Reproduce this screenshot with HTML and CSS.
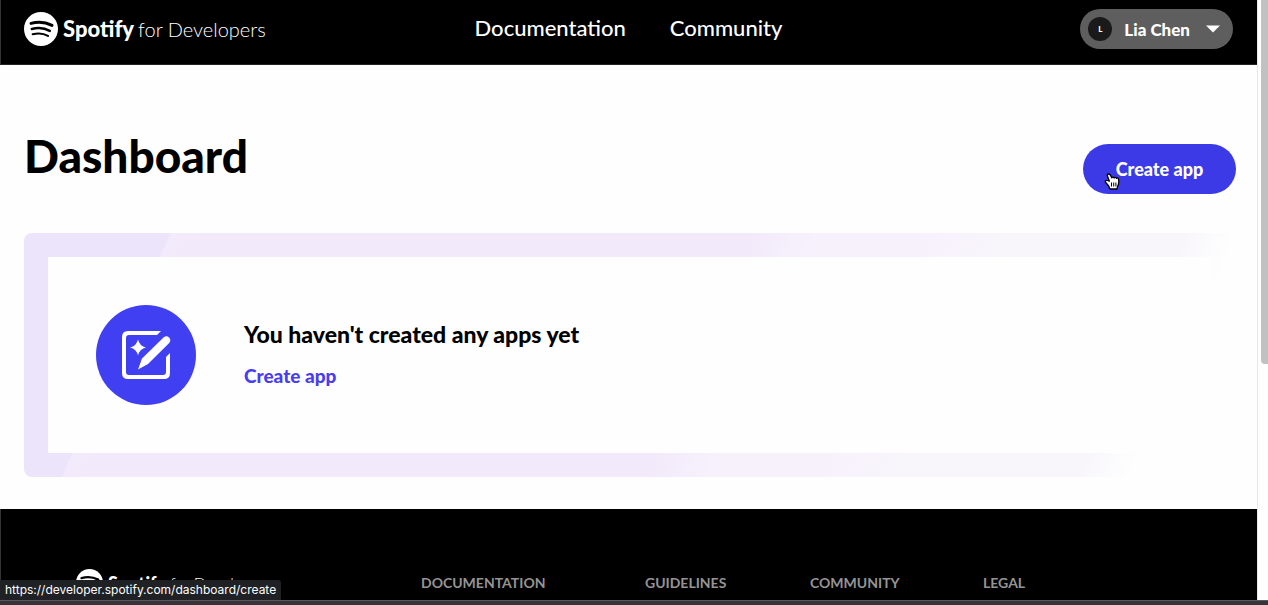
FILE: index.html
```html
<!DOCTYPE html>
<html lang="en">
<head>
<meta charset="utf-8">
<title>Dashboard | Spotify for Developers</title>
<link rel="stylesheet" href="styles.css">
</head>
<body>
<svg class="symbols" aria-hidden="true">
  <symbol id="spotify-mark" viewBox="0 0 34 34">
    <circle cx="17" cy="17" r="17" fill="#fff"/>
    <g fill="none" stroke="#000" stroke-linecap="round">
      <path d="M7 11.4C14 9.4 21.5 10 28 13.4" stroke-width="3"/>
      <path d="M7.8 17C14 15.200 20.500 15.900 25.800 18.900" stroke-width="2.500"/>
      <path d="M8.700 22.300C14 20.900 19.500 21.300 24 23.900" stroke-width="2.100"/>
    </g>
  </symbol>
</svg>
<div class="window">
  <div class="viewport">
    <div class="page">
      <header class="site-header">
        <a class="logo" href="#">
          <svg class="logo-mark" aria-hidden="true"><use href="#spotify-mark"/></svg>
          <span class="logo-name">Spotify</span><span class="logo-sub">for Developers</span>
        </a>
        <nav class="site-nav">
          <a href="#">Documentation</a>
          <a href="#">Community</a>
        </nav>
        <button class="user-menu" type="button">
          <span class="avatar">L</span>
          <span>Lia Chen</span>
          <svg class="caret" viewBox="0 0 14 8" aria-hidden="true"><path d="M0 .5h14L7 7.500z" fill="#fff"/></svg>
        </button>
      </header>
      <main class="content">
        <div class="title-row">
          <h1>Dashboard</h1>
          <div class="create-wrap">
            <button class="create-button" type="button">Create app</button>
            <svg class="pointer" viewBox="0 0 16 17" aria-hidden="true">
              <path d="M4.500 1C3.300 1 3 2 3.400 3l2 5.200L3.500 7.500C2 7 .8 8 1.500 9.300L4.700 13l1.200 3h7.200l.4-2.500c1.300-2 1.600-4.500 1-7.700-.3-1.100-1.500-1.200-2-.4-.3-1.200-1.800-1.300-2.300-.4-.5-1.100-1.900-1-2.300-.2L6.200 1.900C5.800 1.200 5.200 1 4.500 1z" fill="#fff" stroke="#000" stroke-width="1.300" stroke-linejoin="round"/>
              <path d="M7.500 9.500v4M9.700 9.500v4M11.900 9.500v4" stroke="#000" stroke-width="1"/>
            </svg>
          </div>
        </div>
        <section class="empty-frame">
          <div class="empty-panel">
            <svg class="empty-icon" viewBox="0 0 100 100" aria-hidden="true">
              <circle cx="50" cy="50" r="50" fill="#4040f2"/>
              <path d="M65 26H32q-6 0-6 6V68q0 6 6 6H68q6 0 6-6V48l-4 4V67q0 3-3 3H33q-3 0-3-3V33q0-3 3-3H61z" fill="#fff"/>
              <path d="M42 34.500q1.500 6.500 8 8-6.500 1.500-8 8-1.500-6.500-8-8 6.500-1.500 8-8z" fill="#fff"/>
              <path d="M42 64.500L46 53.500 67.500 32.500q3-2.500 5.500 0t.2 5.500L52 59z" fill="#fff"/>
            </svg>
            <div class="empty-text">
              <h2>You haven't created any apps yet</h2>
              <a href="#">Create app</a>
            </div>
          </div>
        </section>
      </main>
      <footer class="site-footer">
        <a class="logo logo-small" href="#">
          <svg class="logo-mark" aria-hidden="true"><use href="#spotify-mark"/></svg>
          <span class="logo-name">Spotify</span><span class="logo-sub">for Developers</span>
        </a>
        <h3>DOCUMENTATION</h3>
        <h3>GUIDELINES</h3>
        <h3>COMMUNITY</h3>
        <h3>LEGAL</h3>
      </footer>
    </div>
    <div class="scroll-track"><div class="scroll-thumb"></div></div>
    <div class="link-status">https://developer.spotify.com/dashboard/create</div>
  </div>
  <div class="window-edge"></div>
</div>
</body>
</html>
```
FILE: styles.css
```css
* { box-sizing: border-box; }
body {
  margin: 0;
  background: #fefefe;
  color: #000;
  font-family: Lato, "Liberation Sans", sans-serif;
}
h1, h2, h3 { margin: 0; font-weight: 700; }
a { color: inherit; text-decoration: none; }
button { border: 0; font: inherit; cursor: pointer; }
.symbols { display: none; }

.window { display: flex; flex-direction: column; height: 100vh; overflow: hidden; }
.viewport { position: relative; display: flex; flex: 1; min-height: 0; overflow: hidden; }
.page { flex: 1; min-width: 0; }

.site-header {
  display: grid;
  grid-template-columns: 1fr auto 1fr;
  align-items: center;
  padding: 9px 24px 15px 23px;
  background: #000;
  color: #fff;
  border-left: 1px solid #333;
  border-bottom: 1px solid #222;
}
.logo { display: flex; align-items: center; white-space: nowrap; color: #fff; font-size: 22px; line-height: 34px; }
.logo-mark { width: 34px; height: 34px; flex: none; }
.logo-name { margin-left: 5px; font-weight: 900; }
.logo-sub { margin-left: 4px; font-size: 20px; font-weight: 300; }

.site-nav { display: flex; gap: 44px; font-size: 22px; line-height: 28px; padding-bottom: 2px; font-weight: 500; }

.user-menu {
  justify-self: end;
  display: flex;
  align-items: center;
  height: 40px;
  padding: 0 13px 0 8px;
  border-radius: 20px;
  background: #5e5e5e;
  color: #fff;
  font-size: 17px;
  font-weight: 900;
}
.avatar {
  width: 24px;
  margin-right: 12px;
  border-radius: 50%;
  background: #1a1a1a;
  font-size: 8px;
  line-height: 24px;
}
.caret { width: 14px; height: 8px; margin-left: 16px; }

.content { padding: 60px 21px 32px 24px; }
.title-row { display: flex; align-items: flex-start; justify-content: space-between; height: 108px; }
h1 { font-size: 46px; line-height: 62px; font-weight: 900; }
.create-wrap { position: relative; margin-top: 19px; }
.create-button {
  min-width: 153px;
  height: 50px;
  border-radius: 25px;
  background: #3c3ae6;
  color: #fff;
  font-size: 18px;
  font-weight: 900;
}
.pointer { position: absolute; left: 21px; top: 29px; width: 16px; height: 17px; }

.empty-frame {
  padding: 24px;
  border-radius: 8px;
  background: linear-gradient(114deg,
    #ece4fb 0, #ece4fb 11%, #f3ebfb 11.200%, #f2e9fa 14%,
    #f2e9fa 55%, #f7f1fc 60%, #f7f1fc 68%,
    #f8f6fb 76%, #f8f6fb 88%, #fefefe 92%);
}
.empty-panel { display: flex; align-items: center; gap: 48px; padding: 48px; background: #fefefe; }
.empty-icon { width: 100px; height: 100px; flex: none; }
.empty-text { padding-bottom: 4px; }
h2 { font-size: 23px; line-height: 32px; font-weight: 900; }
.empty-text a { display: block; margin-top: 14px; color: #4a3df0; font-size: 19px; line-height: 24px; font-weight: 900; }

.site-footer {
  display: grid;
  grid-template-columns: 345fr 224fr 165fr 173fr 198fr;
  align-items: start;
  min-height: 100%;
  padding: 60px 76px 60px 75px;
  background: #000;
  border-left: 1px solid #333;
}
.site-footer h3 { margin-top: 4px; color: #949494; font-size: 14px; line-height: 20px; }
.logo-small { font-size: 18px; line-height: 26px; }
.logo-small .logo-mark { width: 27px; height: 27px; }
.logo-small .logo-sub { font-size: 16px; }

.scroll-track { width: 11px; padding-left: 3px; border-left: 1px solid #e8e8e8; background: #fefefe; }
.scroll-thumb { height: 364px; max-height: 61%; border-radius: 0 0 0 4px; background: #c1c1c1; }
.link-status {
  position: absolute;
  left: 0;
  bottom: 0;
  padding: 0 5px;
  border-top-right-radius: 3px;
  background: #202124;
  color: #fff;
  font-family: Inter, sans-serif;
  font-size: 12px;
  line-height: 20px;
}
.window-edge { height: 5px; background: #363439; border-top: 1px solid #59575d; }
```
